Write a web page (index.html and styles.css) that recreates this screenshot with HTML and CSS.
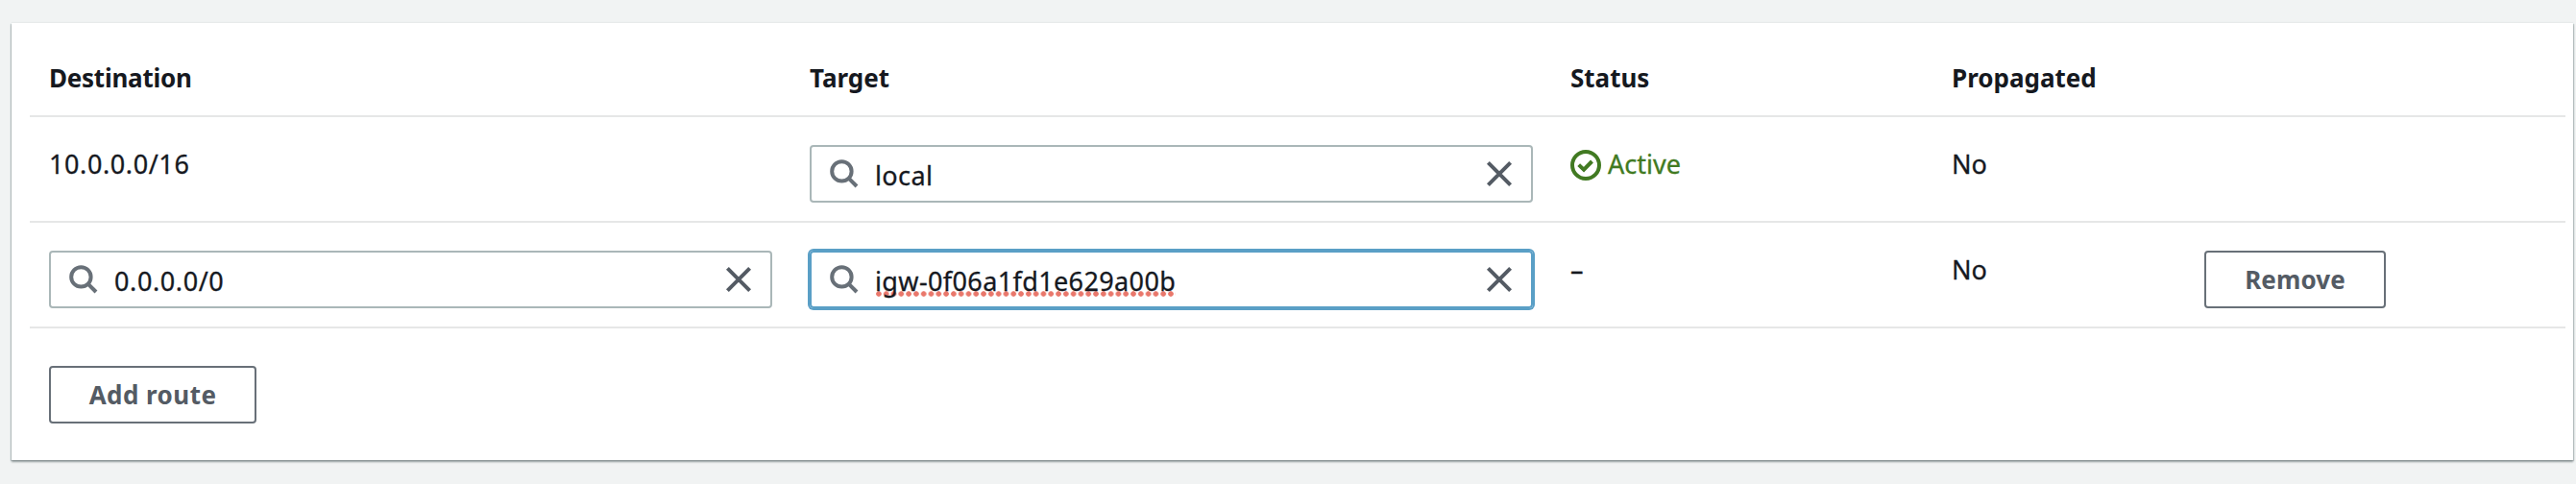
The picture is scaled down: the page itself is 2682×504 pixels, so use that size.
FILE: index.html
```html
<!DOCTYPE html>
<html lang="en">
<head>
<meta charset="utf-8">
<title>Edit routes</title>
<link rel="stylesheet" href="styles.css">
</head>
<body>
<svg class="defs" aria-hidden="true">
  <symbol id="search" viewBox="0 0 32 32"><circle cx="13.4" cy="13.4" r="10.2"/><path d="M20.6 20.6 29 29"/></symbol>
  <symbol id="close" viewBox="0 0 32 32"><path d="M4.4 4.4 27.6 27.6M27.6 4.4 4.4 27.6"/></symbol>
  <symbol id="check" viewBox="0 0 32 32"><circle cx="16" cy="16" r="14"/><path d="M8.7 15.6 14 20.6 22.5 12"/></symbol>
</svg>
<main class="card">
  <div class="row head">
    <div class="cell tight">Destination</div>
    <div class="cell">Target</div>
    <div class="cell">Status</div>
    <div class="cell">Propagated</div>
    <div class="cell"></div>
  </div>
  <div class="row">
    <div class="cell address">10.0.0.0/16</div>
    <div class="cell">
      <div class="field"><svg class="search"><use href="#search"/></svg><span class="value word">local</span><svg class="close"><use href="#close"/></svg></div>
    </div>
    <div class="cell"><div class="status"><svg class="check"><use href="#check"/></svg><span>Active</span></div></div>
    <div class="cell">No</div>
    <div class="cell"></div>
  </div>
  <div class="row">
    <div class="cell">
      <div class="field"><svg class="search"><use href="#search"/></svg><span class="value cidr">0.0.0.0/0</span><svg class="close"><use href="#close"/></svg></div>
    </div>
    <div class="cell">
      <div class="field focused"><svg class="search"><use href="#search"/></svg><span class="value misspelled">igw-0f06a1fd1e629a00b</span><svg class="close"><use href="#close"/></svg></div>
    </div>
    <div class="cell">–</div>
    <div class="cell">No</div>
    <div class="cell"><button class="button remove">Remove</button></div>
  </div>
  <div class="footer"><button class="button add">Add route</button></div>
</main>
</body>
</html>
```
FILE: styles.css
```css
* { box-sizing: border-box; }
body {
  margin: 0;
  padding: 24px 3px 25px 12px;
  height: 504px;
  background: #f1f3f3;
  color: #16191f;
  font: 27px/40px "Noto Sans", "Open Sans", sans-serif;
  -webkit-text-stroke: .3px;
}
.defs { position: absolute; width: 0; height: 0; }
svg { fill: none; flex: none; }
.card {
  height: 455px;
  padding: 0 8px 0 19px;
  background: #fff;
  box-shadow: 0 2px 2px #8f9899, 1px 1px 1px #c5cccd, -1px 1px 1px #c5cccd, 0 -1px 1px #e7eaea;
}
.row {
  display: grid;
  grid-template-columns: 792px 792px 397px 263px 1fr;
  height: 110px;
  border-bottom: 2px solid #e6e7e7;
}
.cell { padding: 29px 20px 0; }
.head { height: 98px; font-size: 26px; font-weight: 700; -webkit-text-stroke: 0; }
.head .cell { padding-top: 37px; }
.head .tight { letter-spacing: -.25px; }
.address { letter-spacing: .6px; }
.field {
  display: flex;
  align-items: center;
  width: 753px;
  height: 60px;
  padding: 0 17px 0 18px;
  border: 2px solid #aab7b8;
  border-radius: 4px;
}
.focused { border-color: #5a9fc6; box-shadow: 0 0 0 2px #5a9fc6; }
.search { width: 32px; height: 32px; stroke: #687078; stroke-width: 4; }
.close { width: 32px; height: 32px; stroke: #545b64; stroke-width: 4; margin-left: auto; }
.value { margin: 4px 0 0 16px; }
.word { letter-spacing: .4px; }
.cidr { letter-spacing: .6px; }
.misspelled {
  letter-spacing: .38px;
  height: 40px;
  background: radial-gradient(circle, #e9776b 2.4px, transparent 3.1px) 0 30px / 7.8px 6px repeat-x;
}
.status { display: flex; align-items: center; gap: 7px; color: #417a22; }
.check { width: 32px; height: 32px; stroke: #417a22; stroke-width: 4; margin-top: 1px; }
.button {
  display: block;
  height: 60px;
  padding: 0;
  border: 2px solid #687078;
  border-radius: 4px;
  background: #fff;
  color: #545b64;
  font: 700 26px/40px "Noto Sans", "Open Sans", sans-serif;
  -webkit-text-stroke: 0;
}
.remove { width: 189px; letter-spacing: .1px; }
.add { width: 216px; letter-spacing: .45px; }
.footer { padding: 39px 20px 0; }
```
